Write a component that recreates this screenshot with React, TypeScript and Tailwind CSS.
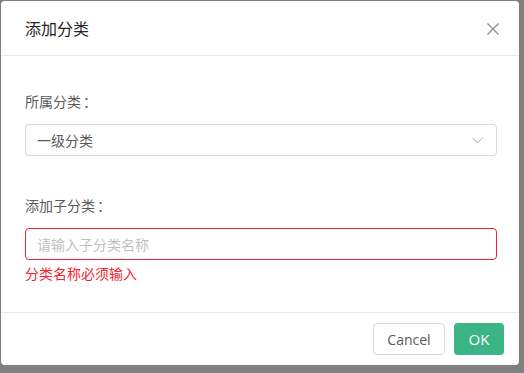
import React from "react";

const zh = { fontFamily: '"Noto Sans CJK SC", "Noto Sans", sans-serif' };
const en = { fontFamily: '"Open Sans", "Noto Sans CJK SC", sans-serif' };

export default function App() {
  return (
    <div className="h-[373px] w-[524px] bg-[#808080] pl-px pt-px overflow-hidden">
      <div className="flex h-[364px] w-[518px] flex-col rounded-[4px] bg-white" style={zh}>
        <div className="flex h-[55px] items-center justify-between border-b border-[#e8e8e8] pl-6 pr-[20px]">
          <span className="text-[16px] leading-[22px] text-[#262626]">添加分类</span>
          <svg width="12" height="12" viewBox="0 0 12 12" className="mt-px">
            <path d="M0.5 0.5 L11.5 11.5 M11.5 0.5 L0.5 11.5" stroke="#8c8c8c" strokeWidth="1.3" fill="none" />
          </svg>
        </div>
        <div className="flex flex-1 flex-col pl-6 pr-[22px] pt-[34px]">
          <div className="text-[14px] leading-[22px] text-[#595959]">所属分类<span className="ml-[2px]">：</span></div>
          <div className="mt-[12px] flex h-[32px] items-center justify-between rounded-[4px] border border-[#d9d9d9] pl-[11px] pr-[13px]">
            <span className="text-[14px] text-[#595959]">一级分类</span>
            <svg width="11" height="7" viewBox="0 0 11 7">
              <path d="M0.5 0.8 L5.5 5.8 L10.5 0.8" stroke="#bfbfbf" strokeWidth="1.1" fill="none" />
            </svg>
          </div>
          <div className="mt-[38px] text-[14px] leading-[22px] text-[#595959]">添加子分类<span className="ml-[2px]">：</span></div>
          <div className="mt-[12px] flex h-[32px] items-center rounded-[4px] border border-[#f5222d] pl-[11px]">
            <span className="text-[14px] text-[#bfbfbf]">请输入子分类名称</span>
          </div>
          <div className="mt-[2px] text-[14px] leading-[22px] text-[#f5222d]">分类名称必须输入</div>
        </div>
        <div className="flex h-[53px] items-center justify-end gap-[9px] border-t border-[#e8e8e8] pr-[15px]" style={en}>
          <button className="h-[32px] w-[72px] rounded-[4px] border border-[#d9d9d9] bg-white text-[14px] text-[#595959]">Cancel</button>
          <button className="h-[32px] w-[50px] rounded-[4px] bg-[#3bb486] text-[15px] text-white">OK</button>
        </div>
      </div>
    </div>
  );
}
